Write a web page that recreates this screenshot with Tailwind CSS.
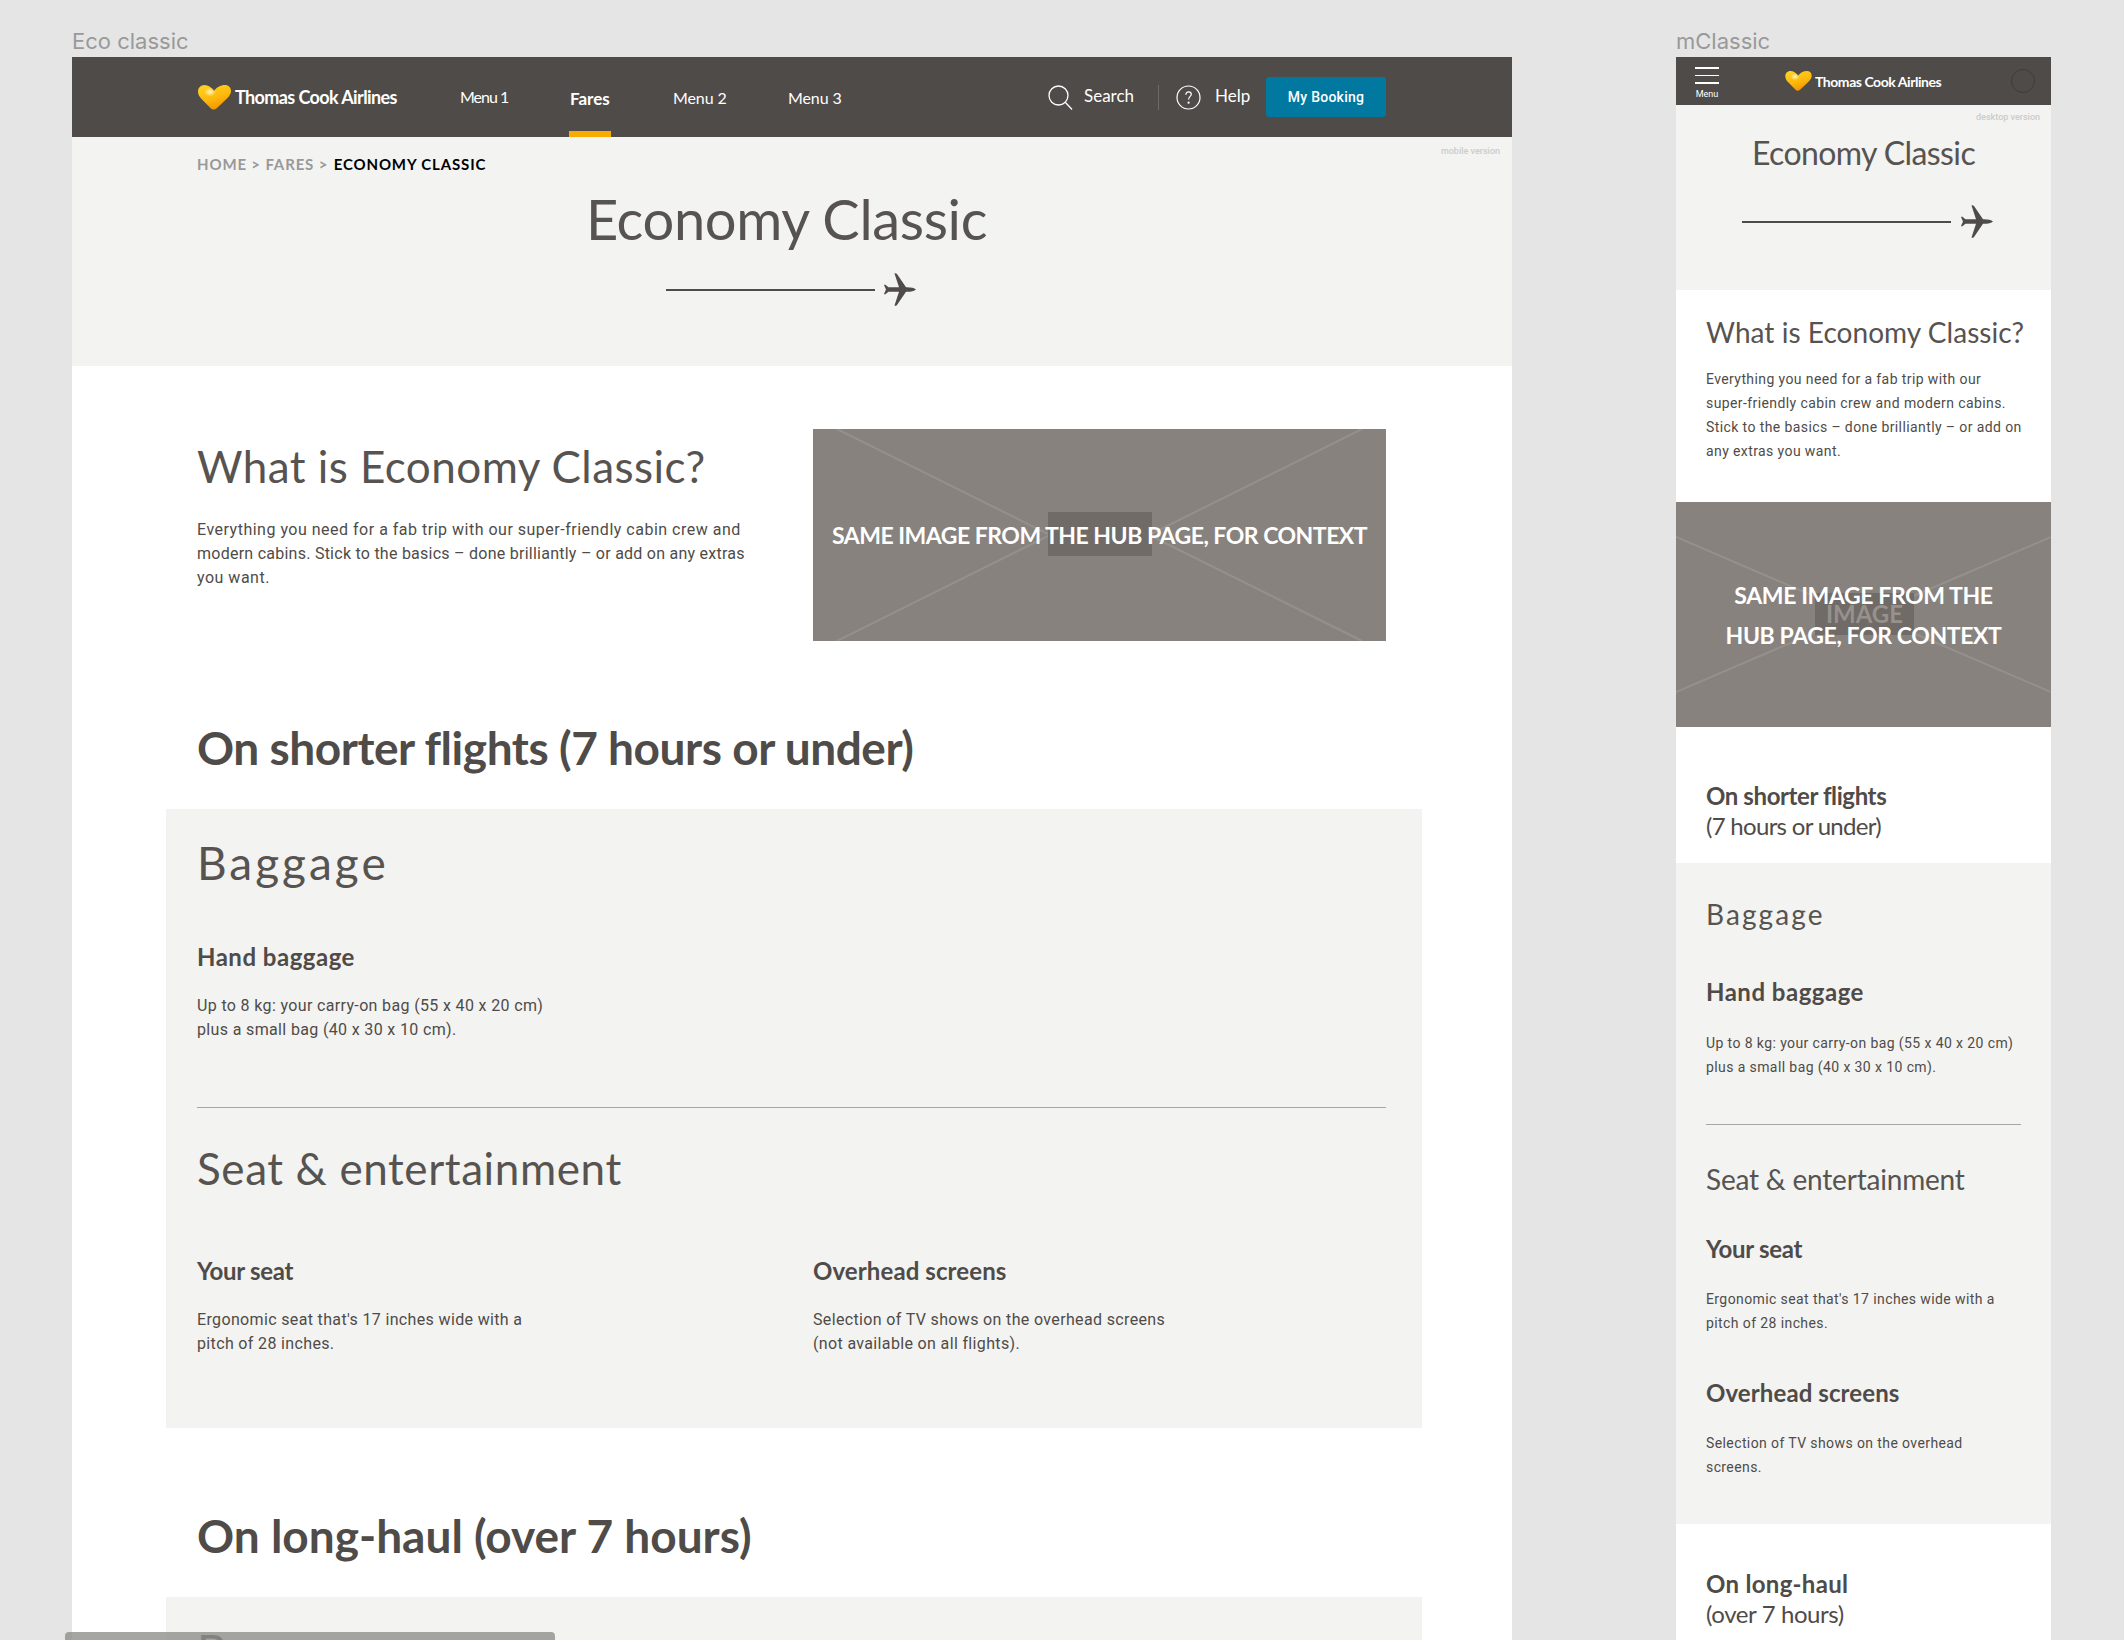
<!DOCTYPE html>
<html lang="en">
<head>
<meta charset="utf-8" />
<title>Economy Classic</title>
<script src="https://cdn.jsdelivr.net/npm/@tailwindcss/browser@4"></script>
</head>
<body class="bg-[#e5e5e5]">
<svg class="absolute w-0 h-0">
  <defs>
    <linearGradient id="heart-fill" x1="0.2" y1="0" x2="0.6" y2="1">
      <stop offset="0" stop-color="#ffd21f" />
      <stop offset="0.55" stop-color="#fdb90c" />
      <stop offset="1" stop-color="#f39200" />
    </linearGradient>
    <radialGradient id="heart-shine" cx="0.5" cy="0.5" r="0.5">
      <stop offset="0" stop-color="#fff6c0" />
      <stop offset="1" stop-color="#fff6c0" stop-opacity="0" />
    </radialGradient>
  </defs>
</svg>
<div class="relative h-[1640px] w-[2124px] overflow-hidden flex items-start pl-[72px] font-['Lato',sans-serif] text-[#4f4b48]">

  <!-- desktop artboard -->
  <div class="w-[1440px] shrink-0">
    <div class="h-[57px] pt-[28px] text-[22px] leading-[26px] text-[#999999] font-['Inter',sans-serif]">Eco classic</div>
    <div class="bg-white h-[1583px] overflow-hidden">
      <header class="h-[80px] bg-[#4f4b48] flex items-center pl-[126px] pr-[126px] text-white relative">
        <svg class="w-[33px] h-[25px] shrink-0" viewBox="0 0 33 25"><path fill="url(#heart-fill)" d="M16 6C13.500 2 10 0 6.500 0C2.500 0 0 3 0 6.500C0 9.500 1.500 12 4 14.500L12.500 23C14.500 25 16.500 25 18.500 23.500L29 13.500C31.500 11 33 8.500 33 6C33 2.500 30.500 0 27 0C22.500 0 18.500 2.500 16 6Z" /><ellipse cx="12" cy="7" rx="6" ry="4.500" fill="url(#heart-shine)" /></svg>
        <span class="ml-[4px] w-[163px] text-[18px] font-bold tracking-[-0.6px] whitespace-nowrap">Thomas Cook Airlines</span>
        <nav class="ml-[62px] flex h-full text-[16px]">
          <a class="w-[110px] pt-[28px] tracking-[-1px]">Menu 1</a>
          <a class="relative w-[103px] pt-[29px] text-[17px] font-bold">Fares<span class="absolute left-[-1px] bottom-0 h-[6px] w-[42px] bg-[#f9ab00]"></span></a>
          <a class="w-[115px] pt-[29px] tracking-[-0.1px]">Menu 2</a>
          <a class="pt-[29px] tracking-[-0.1px]">Menu 3</a>
        </nav>
        <div class="ml-auto flex items-center">
          <svg class="w-[25px] h-[25px]" viewBox="0 0 25 25" fill="none" stroke="#ffffff" stroke-width="1.300"><circle cx="10.500" cy="10.500" r="9.500" /><path d="M17.500 17.500L24 24.500" /></svg>
          <span class="ml-[11px] w-[52px] pb-[2px] text-[17px] leading-[24px]">Search</span>
          <span class="ml-[22px] h-[25px] w-px bg-[#6f6b68]"></span>
          <svg class="ml-[17px] w-[25px] h-[25px]" viewBox="0 0 25 25" fill="none" stroke="#ffffff" stroke-width="1.200"><circle cx="12.500" cy="12.500" r="11.500" /><path d="M9.800 9.800C10 7.800 11 6.800 12.600 6.800C14.300 6.800 15.300 8 15.300 9.300C15.300 11.300 12.600 11.600 12.600 14.500" /><circle cx="12.600" cy="17.700" r="0.500" /></svg>
          <span class="ml-[14px] w-[35px] pb-[2px] text-[17px] leading-[24px]">Help</span>
          <a class="ml-[16px] flex h-[40px] w-[120px] items-center justify-center rounded-[3px] bg-[#00789f] text-[14px] font-medium tracking-[0.25px] font-['Roboto',sans-serif]">My Booking</a>
        </div>
      </header>

      <section class="relative h-[229px] bg-[#f3f3f1] pt-[15px]">
        <span class="absolute right-[12px] top-[8px] text-[9px] leading-[12px] font-medium text-[#cccccc] font-['Roboto',sans-serif]">mobile version</span>
        <div class="pl-[125px] text-[15px] leading-[24px] font-bold tracking-[0.85px] text-[#999999]">HOME &gt; FARES &gt; <span class="ml-[1px] text-black">ECONOMY CLASSIC</span></div>
        <h1 class="mt-[11px] pr-[11px] text-center text-[56px] leading-[64px] tracking-[-0.35px] text-[#575350]">Economy Classic</h1>
        <div class="mt-[22px] pr-[2px] flex items-center justify-center">
          <span class="h-[2px] w-[209px] bg-[#4f4b48]"></span>
          <svg class="ml-[8px] w-[33px] h-[33px]" viewBox="0 0 33 33" fill="#4f4b48"><path d="M33 16.500C31.500 15 28 14.200 24 14.200L23 14.200L14 1C13 0 12 0 11.500 0.500L16 14.200L5.500 14.200L2 11.500L1 12L3 16.500L1 21L2 21.500L5.500 18.800L16 18.800L11.500 32.500C12 33 13 33 14 32L23 18.800L24 18.800C28 18.800 31.500 18 33 16.500Z" /></svg>
        </div>
      </section>

      <section class="flex pl-[125px] pt-[63px]">
        <div class="w-[616px] pt-[9px]">
          <h2 class="text-[44px] leading-[56px] tracking-[0.45px] whitespace-nowrap text-[#575350]">What is Economy Classic?</h2>
          <p class="mt-[24px] text-[16px] leading-[24px] tracking-[0.5px] font-['Roboto',sans-serif]">Everything you need for a fab trip with our super-friendly cabin crew and<br /><span class="tracking-[0.25px]">modern cabins. Stick to the basics – done brilliantly – or add on any extras</span><br />you want.</p>
        </div>
        <div class="relative flex h-[212px] w-[573px] items-center justify-center overflow-hidden bg-[#87827e]">
          <svg class="absolute inset-0 w-full h-full" viewBox="0 0 573 212" stroke="#94908c" stroke-width="2"><path d="M24 0L235 105M549 0L338 105M24 212L235 107M549 212L338 107" /></svg>
          <span class="absolute left-[235px] top-[83px] h-[44px] w-[104px] bg-[#706b67]"></span>
          <span class="relative text-[23px] font-bold tracking-[-0.5px] text-white whitespace-nowrap">SAME IMAGE FROM THE HUB PAGE, FOR CONTEXT</span>
        </div>
      </section>

      <h2 class="mt-[79px] pl-[125px] text-[46px] leading-[56px] font-bold tracking-[-0.45px]">On shorter flights (7 hours or under)</h2>

      <section class="mt-[33px] ml-[94px] w-[1256px] bg-[#f3f3f2] pl-[31px] pr-[36px] pt-[26px] pb-[72px]">
        <h3 class="text-[46px] leading-[56px] tracking-[3px] text-[#575350]">Baggage</h3>
        <h4 class="mt-[50px] text-[24px] leading-[32px] font-bold tracking-[0.5px]">Hand baggage</h4>
        <p class="mt-[21px] text-[16px] leading-[24px] tracking-[0.35px] font-['Roboto',sans-serif]">Up to 8 kg: your carry-on bag (55 x 40 x 20 cm)<br />plus a small bag (40 x 30 x 10 cm).</p>
        <div class="mt-[65px] h-px bg-[#a8a6a3]"></div>
        <h3 class="mt-[32px] text-[44px] leading-[56px] tracking-[0.6px] text-[#575350]">Seat &amp; entertainment</h3>
        <div class="mt-[59px] flex">
          <div class="w-[616px]">
            <h4 class="text-[24px] leading-[32px] font-bold tracking-[-0.3px]">Your seat</h4>
            <p class="mt-[21px] text-[16px] leading-[24px] tracking-[0.35px] font-['Roboto',sans-serif]">Ergonomic seat that's 17 inches wide with a<br />pitch of 28 inches.</p>
          </div>
          <div>
            <h4 class="text-[24px] leading-[32px] font-bold tracking-[0.1px]">Overhead screens</h4>
            <p class="mt-[21px] text-[16px] leading-[24px] tracking-[0.35px] font-['Roboto',sans-serif]">Selection of TV shows on the overhead screens<br />(not available on all flights).</p>
          </div>
        </div>
      </section>

      <h2 class="mt-[80px] pl-[125px] text-[46px] leading-[56px] font-bold tracking-[0px]">On long-haul (over 7 hours)</h2>

      <section class="mt-[33px] ml-[94px] w-[1256px] bg-[#f3f3f2] pl-[31px] pt-[26px]">
        <h3 class="text-[46px] leading-[56px] tracking-[3px] text-[#575350]">Baggage</h3>
      </section>
    </div>
  </div>

  <!-- mobile artboard -->
  <div class="ml-[164px] w-[375px] shrink-0">
    <div class="h-[57px] pt-[28px] text-[22px] leading-[26px] text-[#999999] font-['Inter',sans-serif]">mClassic</div>
    <div class="bg-white h-[1583px] overflow-hidden">
      <header class="relative h-[48px] bg-[#4f4b48] flex items-center text-white">
        <div class="ml-[19px] w-[24px] pt-[10px] self-start">
          <div class="flex flex-col gap-[6px]">
            <span class="block h-[1.500px] w-[24px] bg-white"></span>
            <span class="block h-[1.500px] w-[24px] bg-white"></span>
            <span class="block h-[1.500px] w-[24px] bg-white"></span>
          </div>
          <div class="mt-[4px] text-center text-[9px] leading-[12px] font-['Roboto',sans-serif]">Menu</div>
        </div>
        <svg class="ml-[66px] w-[27px] h-[20px] shrink-0" viewBox="0 0 33 25"><path fill="url(#heart-fill)" d="M16 6C13.500 2 10 0 6.500 0C2.500 0 0 3 0 6.500C0 9.500 1.500 12 4 14.500L12.500 23C14.500 25 16.500 25 18.500 23.500L29 13.500C31.500 11 33 8.500 33 6C33 2.500 30.500 0 27 0C22.500 0 18.500 2.500 16 6Z" /><ellipse cx="12" cy="7" rx="6" ry="4.500" fill="url(#heart-shine)" /></svg>
        <span class="ml-[3px] text-[14px] font-bold tracking-[-0.45px] whitespace-nowrap">Thomas Cook Airlines</span>
        <span class="absolute left-[335px] top-[12px] h-[24px] w-[24px] rounded-full border border-[#3f3b38]"></span>
      </header>

      <section class="relative h-[185px] bg-[#f3f3f1] pt-[28px]">
        <span class="absolute right-[11px] top-[6px] text-[9px] leading-[12px] font-medium text-[#cccccc] font-['Roboto',sans-serif]">desktop version</span>
        <h1 class="text-center text-[32px] leading-[40px] tracking-[-0.6px] text-[#575350]">Economy Classic</h1>
        <div class="mt-[32px] pl-[8px] flex items-center justify-center">
          <span class="h-[2px] w-[209px] bg-[#4f4b48]"></span>
          <svg class="ml-[9px] w-[33px] h-[33px]" viewBox="0 0 33 33" fill="#4f4b48"><path d="M33 16.500C31.500 15 28 14.200 24 14.200L23 14.200L14 1C13 0 12 0 11.500 0.500L16 14.200L5.500 14.200L2 11.500L1 12L3 16.500L1 21L2 21.500L5.500 18.800L16 18.800L11.500 32.500C12 33 13 33 14 32L23 18.800L24 18.800C28 18.800 31.500 18 33 16.500Z" /></svg>
        </div>
      </section>

      <section class="px-[30px] pt-[24px]">
        <h2 class="text-[28px] leading-[36px] tracking-[0.05px] whitespace-nowrap text-[#575350]">What is Economy Classic?</h2>
        <p class="mt-[17px] text-[14px] leading-[24px] tracking-[0.4px] whitespace-nowrap font-['Roboto',sans-serif]">Everything you need for a fab trip with our<br />super-friendly cabin crew and modern cabins.<br />Stick to the basics – done brilliantly – or add on<br />any extras you want.</p>
      </section>

      <div class="relative mt-[39px] flex h-[225px] flex-col items-center justify-center overflow-hidden bg-[#87827e]">
        <svg class="absolute inset-0 w-full h-full" viewBox="0 0 375 225" stroke="#94908c" stroke-width="2"><path d="M0 35L140 95M375 35L235 95M0 190L140 130M375 190L235 130" /></svg>
        <span class="absolute left-[139px] top-[91px] flex h-[42px] w-[99px] items-center justify-center bg-[#706b67] text-[24px] font-bold text-[#96918d]">IMAGE</span>
        <span class="relative text-center text-[23px] leading-[40px] font-bold tracking-[-0.4px] text-white">SAME IMAGE FROM THE<br />HUB PAGE, FOR CONTEXT</span>
      </div>

      <h2 class="mt-[54px] px-[30px] text-[24px] leading-[30px] tracking-[-0.4px]"><b class="font-bold">On shorter flights</b><br /><span class="font-normal tracking-[-0.7px]">(7 hours or under)</span></h2>

      <section class="mt-[22px] bg-[#f3f3f2] px-[30px] pt-[33px] pb-[45px]">
        <h3 class="text-[28px] leading-[36px] tracking-[2.1px] text-[#575350]">Baggage</h3>
        <h4 class="mt-[44px] text-[24px] leading-[32px] font-bold tracking-[0.5px]">Hand baggage</h4>
        <p class="mt-[23px] text-[14px] leading-[24px] tracking-[0.4px] whitespace-nowrap font-['Roboto',sans-serif]">Up to 8 kg: your carry-on bag (55 x 40 x 20 cm)<br />plus a small bag (40 x 30 x 10 cm).</p>
        <div class="mt-[45px] h-px bg-[#a8a6a3]"></div>
        <h3 class="mt-[36px] text-[28px] leading-[36px] tracking-[-0.2px] text-[#575350]">Seat &amp; entertainment</h3>
        <h4 class="mt-[36px] text-[24px] leading-[32px] font-bold tracking-[-0.3px]">Your seat</h4>
        <p class="mt-[22px] text-[14px] leading-[24px] tracking-[0.4px] font-['Roboto',sans-serif]">Ergonomic seat that's 17 inches wide with a<br />pitch of 28 inches.</p>
        <h4 class="mt-[42px] text-[24px] leading-[32px] font-bold tracking-[0.1px]">Overhead screens</h4>
        <p class="mt-[22px] text-[14px] leading-[24px] tracking-[0.4px] font-['Roboto',sans-serif]">Selection of TV shows on the overhead<br />screens.</p>
      </section>

      <h2 class="mt-[45px] px-[30px] text-[24px] leading-[30px] tracking-[-0.4px]"><b class="font-bold tracking-[0.3px]">On long-haul</b><br /><span class="font-normal">(over 7 hours)</span></h2>
    </div>
  </div>

  <!-- canvas scrollbar -->
  <div class="absolute left-[65px] top-[1632px] h-[8px] w-[490px] rounded-t-[4px] bg-[#8e8e8c]/80"></div>
</div>
</body>
</html>
